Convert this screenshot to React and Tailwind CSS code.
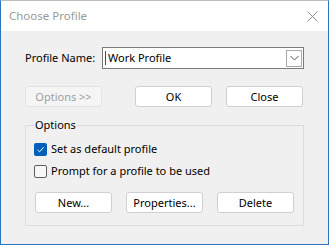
import React from 'react';

const font = { fontFamily: '"Noto Sans", "Open Sans", sans-serif' };

const Btn = ({ children, disabled, className = '' }) => (
  <button
    className={`h-[21px] w-[77px] rounded-[3px] border text-[11px] leading-none ${
      disabled
        ? 'border-[#e3e3e3] bg-[#f5f5f5] text-[#a0a0a0]'
        : 'border-[#d0d0d0] bg-white text-black'
    } ${className}`}
  >
    {children}
  </button>
);

const Check = ({ checked, label }) => (
  <label className="flex h-[16px] items-center gap-[4px] text-[11px] leading-[16px] text-black">
    {checked ? (
      <span className="flex h-[13px] w-[13px] items-center justify-center rounded-[2px] bg-[#005fb8]">
        <svg width="9" height="9" viewBox="0 0 9 9">
          <path d="M1.5 4.8 L3.6 6.8 L7.6 2.2" fill="none" stroke="white" strokeWidth="1" />
        </svg>
      </span>
    ) : (
      <span className="h-[13px] w-[13px] rounded-[2px] border border-[#5f5f5f] bg-[#f7f7f7]" />
    )}
    <span>{label}</span>
  </label>
);

export default function App() {
  return (
    <div
      className="flex h-[245px] w-[329px] flex-col border border-[#2b74c0] border-t-[#bdbdbd] bg-[#f0f0f0]"
      style={font}
    >
      {/* title bar */}
      <div className="flex h-[30px] items-center justify-between bg-white pl-[8px] pr-[10px]">
        <span className="text-[11.5px] text-[#9a9a9a]">Choose Profile</span>
        <svg width="11" height="11" viewBox="0 0 11 11">
          <path d="M0.5 0.5 L10.5 10.5 M10.5 0.5 L0.5 10.5" stroke="#8c8c8c" strokeWidth="1" />
        </svg>
      </div>

      <div className="flex flex-col px-[24px] pt-[16px]">
        {/* profile name */}
        <div className="flex items-center">
          <span className="w-[77px] text-[11px] text-black">Profile Name:</span>
          <div className="flex h-[22px] w-[202px] items-center border border-[#7a7a7a] bg-white pl-[2px] pr-[1px]">
            <span className="h-[14px] w-px bg-[#0063b1]" />
            <span className="ml-[2px] flex-1 text-[11px] text-black">Work Profile</span>
            <span className="flex h-[17px] w-[16px] items-center justify-center border border-[#a8a8a8] bg-white">
              <svg width="9" height="6" viewBox="0 0 9 6">
                <path d="M0.5 1 L4.5 5 L8.5 1" fill="none" stroke="#555" strokeWidth="1" />
              </svg>
            </span>
          </div>
        </div>

        {/* buttons */}
        <div className="mt-[17px] flex items-center">
          <Btn disabled>Options &gt;&gt;</Btn>
          <Btn className="ml-[33px]">OK</Btn>
          <Btn className="ml-[14px]">Close</Btn>
        </div>

        {/* options group */}
        <fieldset className="mt-[11px] h-[108px] border border-[#dcdcdc] px-[8px]">
          <legend className="px-[1px] text-[11px] leading-[14px] text-black">Options</legend>
          <div className="mt-[9px] flex flex-col gap-[6px]">
            <Check checked label="Set as default profile" />
            <Check label="Prompt for a profile to be used" />
          </div>
          <div className="mt-[13px] flex items-center gap-[14px] pl-[1px]">
            <Btn>New...</Btn>
            <Btn>Properties...</Btn>
            <Btn>Delete</Btn>
          </div>
        </fieldset>
      </div>
    </div>
  );
}
